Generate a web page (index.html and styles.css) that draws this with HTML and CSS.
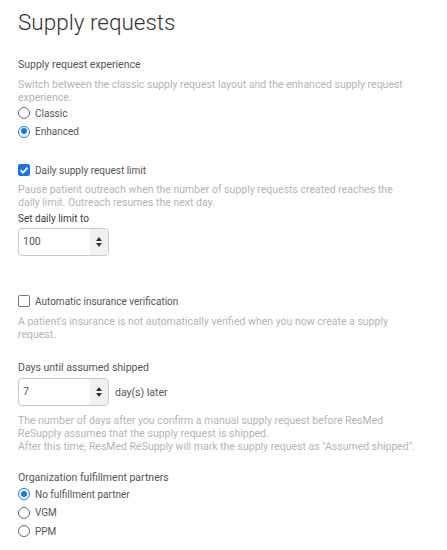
FILE: index.html
```html
<!DOCTYPE html>
<html lang="en">
<head>
  <meta charset="UTF-8" />
  <title>Supply requests</title>
  <link rel="stylesheet" href="styles.css">
</head>
<body>
  <div class="page">
    <h1>Supply requests</h1>

    <section class="group group-experience">
      <div class="group-title">Supply request experience</div>
      <p class="hint">Switch between the classic supply request layout and the enhanced supply request experience.</p>
      <label class="choice"><span class="radio"></span>Classic</label>
      <label class="choice"><span class="radio checked"></span>Enhanced</label>
    </section>

    <section class="group group-limit">
      <label class="choice check-row"><span class="box checked"><svg viewBox="0 0 12 12" width="12" height="12"><path d="M2.6 6.2 L5 8.6 L9.6 3.6" fill="none" stroke="#fff" stroke-width="1.8"/></svg></span>Daily supply request limit</label>
      <p class="hint">Pause patient outreach when the number of supply requests created reaches the daily limit. Outreach resumes the next day.</p>
      <div class="field-label">Set daily limit to</div>
      <div class="number-row">
        <div class="number">
          <span class="number-value">100</span>
          <span class="spinner"><i class="up"></i><i class="down"></i></span>
        </div>
      </div>
    </section>

    <section class="group group-insurance">
      <label class="choice check-row"><span class="box"></span>Automatic insurance verification</label>
      <p class="hint">A patient's insurance is not automatically verified when you now create a supply request.</p>
    </section>

    <section class="group group-shipped">
      <div class="group-title">Days until assumed shipped</div>
      <div class="number-row">
        <div class="number">
          <span class="number-value">7</span>
          <span class="spinner"><i class="up"></i><i class="down"></i></span>
        </div>
        <span class="unit">day(s) later</span>
      </div>
      <p class="hint">The number of days after you confirm a manual supply request before ResMed ReSupply assumes that the supply request is shipped.<br>After this time, ResMed ReSupply will mark the supply request as "Assumed shipped".</p>
    </section>

    <section class="group group-partners">
      <div class="group-title">Organization fulfillment partners</div>
      <label class="choice"><span class="radio checked"></span>No fulfillment partner</label>
      <label class="choice"><span class="radio"></span>VGM</label>
      <label class="choice"><span class="radio"></span>PPM</label>
    </section>
  </div>
</body>
</html>
```

FILE: styles.css
```css
* {
  margin: 0;
  padding: 0;
  box-sizing: border-box;
}

body {
  background: #fff;
  font-family: Roboto, "Liberation Sans", Arial, sans-serif;
  font-size: 10.5px;
  color: #555;
}

.page {
  padding: 8px 0 0 18px;
  width: 415px;
}

h1 {
  font-size: 22.5px;
  font-weight: 300;
  color: #333;
  line-height: 28px;
  margin-bottom: 22px;
}

/* groups */
.group-title,
.field-label {
  line-height: 14px;
}

.field-label {
  color: #3a3a3a;
  font-size: 10px;
}

.hint {
  color: #b4b4b4;
  line-height: 13px;
}

.group-experience .hint {
  margin-top: 6px;
}

.group-limit {
  margin-top: 22px;
}

.group-limit .hint {
  margin-top: 6px;
  margin-bottom: 3px;
}

.group-insurance {
  margin-top: 38px;
}

.group-insurance .hint {
  margin-top: 7px;
}

.group-shipped {
  margin-top: 20px;
}

.group-shipped .hint {
  margin-top: 8px;
}

.group-partners {
  margin-top: 18px;
}

/* radios & checkboxes */
.choice {
  display: flex;
  align-items: center;
  height: 18.5px;
  font-size: 10px;
  color: #555;
}

.check-row {
  height: 14px;
}

.radio {
  width: 12px;
  height: 12px;
  border: 1px solid #666;
  border-radius: 50%;
  margin-right: 5px;
  flex-shrink: 0;
  position: relative;
}

.radio.checked {
  border: 1.5px solid #1a73e8;
}

.radio.checked::after {
  content: '';
  position: absolute;
  top: 1.5px;
  left: 1.5px;
  width: 6px;
  height: 6px;
  border-radius: 50%;
  background: #1a73e8;
}

.box {
  width: 12px;
  height: 12px;
  border: 1px solid #777;
  border-radius: 2px;
  margin-right: 5px;
  flex-shrink: 0;
  display: flex;
}

.box.checked {
  background: #1a73e8;
  border-color: #1a73e8;
}

.box svg {
  margin: -1px;
}

/* number inputs */
.number-row {
  display: flex;
  align-items: center;
  margin-top: 2px;
}

.group-shipped .number-row {
  margin-top: 3px;
}

.number {
  width: 91px;
  height: 28px;
  border: 1px solid #c8c8c8;
  border-radius: 4px;
  display: flex;
  overflow: hidden;
}

.number-value {
  flex: 1;
  padding-left: 4px;
  line-height: 26px;
  color: #555;
}

.spinner {
  width: 18px;
  background: #f1f1f1;
  display: flex;
  flex-direction: column;
  align-items: center;
  justify-content: center;
  gap: 2px;
}

.spinner i {
  width: 0;
  height: 0;
  border-left: 3px solid transparent;
  border-right: 3px solid transparent;
}

.spinner .up {
  border-bottom: 4px solid #333;
}

.spinner .down {
  border-top: 4px solid #333;
}

.unit {
  margin-left: 6px;
  color: #555;
}
```
